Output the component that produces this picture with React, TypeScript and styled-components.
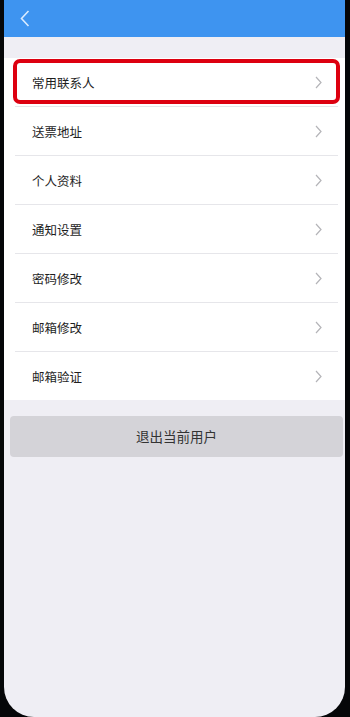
import * as React from "react";
import styled, { createGlobalStyle } from "styled-components";

const GlobalStyle = createGlobalStyle`
  html, body {
    margin: 0;
    padding: 0;
    background: #050608;
  }
  body {
    font-family: "Noto Sans CJK SC", "Noto Sans", sans-serif;
  }
`;

const Screen = styled.div`
  margin-left: 4px;
  width: 341px;
  height: 717px;
  background: #efeef4;
  border-bottom-left-radius: 30px;
  border-bottom-right-radius: 30px;
  overflow: hidden;
  display: flex;
  flex-direction: column;
`;

const Header = styled.div`
  height: 37px;
  background: #3e94f0;
  display: flex;
  align-items: center;
  padding-left: 16px;
`;

const List = styled.ul`
  list-style: none;
  margin: 21px 0 0;
  padding: 0;
  background: #fff;
`;

const Row = styled.li<{ $last?: boolean }>`
  position: relative;
  height: 48px;
  display: flex;
  align-items: center;
  justify-content: space-between;
  padding: 0 23px 0 28px;
  &::after {
    content: "";
    display: ${(p) => (p.$last ? "none" : "block")};
    position: absolute;
    left: 11px;
    right: 7px;
    bottom: -1px;
    height: 1px;
    background: #e6e6ea;
  }
  & + & {
    margin-top: 1px;
  }
`;

const Label = styled.span`
  font-size: 12.5px;
  color: #1e1e1e;
  padding-top: 1px;
`;

const Highlight = styled.div`
  position: absolute;
  left: 9px;
  right: 5px;
  top: 1px;
  bottom: 2px;
  border: 4px solid #dd0010;
  border-radius: 7px;
  pointer-events: none;
`;

const LogoutButton = styled.button`
  margin: 16px 2px 0 6px;
  height: 41px;
  border: none;
  border-radius: 4px;
  background: #d4d3d8;
  color: #333;
  font-family: "Noto Sans CJK SC", "Noto Sans", sans-serif;
  font-size: 13.5px;
  padding-bottom: 2px;
`;

const Chevron = () => (
  <svg width="7" height="13" viewBox="0 0 7 13">
    <path d="M1 1 L6 6.5 L1 12" fill="none" stroke="#b4b4b8" strokeWidth="1.2" />
  </svg>
);

const BackIcon = () => (
  <svg width="10" height="17" viewBox="0 0 10 17">
    <path d="M8.5 1 L1.5 8.5 L8.5 16" fill="none" stroke="#d9ebff" strokeWidth="1.6" />
  </svg>
);

const items = ["常用联系人", "送票地址", "个人资料", "通知设置", "密码修改", "邮箱修改", "邮箱验证"];

export default function App() {
  return (
    <>
      <GlobalStyle />
      <Screen>
        <Header>
          <BackIcon />
        </Header>
        <List>
          {items.map((label, i) => (
            <Row key={label} $last={i === items.length - 1}>
              <Label>{label}</Label>
              <Chevron />
              {i === 0 && <Highlight />}
            </Row>
          ))}
        </List>
        <LogoutButton>退出当前用户</LogoutButton>
      </Screen>
    </>
  );
}
